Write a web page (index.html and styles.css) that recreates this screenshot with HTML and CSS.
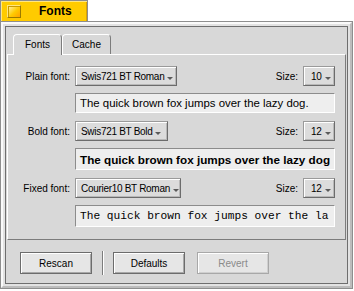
FILE: index.html
```html
<!DOCTYPE html>
<html>
<head>
<meta charset="utf-8">
<title>Fonts</title>
<link rel="stylesheet" href="styles.css">
</head>
<body>
<div class="window">
  <div class="wtab">
    <span class="close"></span>
    <span class="title">Fonts</span>
  </div>
  <div class="frame">
    <div class="bevel">
      <div class="content">
        <div class="tabs">
          <div class="tab active">Fonts</div>
          <div class="tab">Cache</div>
        </div>
        <div class="panel">
          <div class="group">
            <div class="row">
              <span class="label">Plain font:</span>
              <div class="menu menu-plain">Swis721 BT Roman<svg class="arrow" width="6" height="3" viewBox="0 0 6 3"><polygon points="0,0 6,0 3,3"/></svg></div>
              <span class="size-label">Size:</span>
              <div class="menu size">10<svg class="arrow" width="6" height="3" viewBox="0 0 6 3"><polygon points="0,0 6,0 3,3"/></svg></div>
            </div>
            <div class="preview preview-plain">The quick brown fox jumps over the lazy dog.</div>
          </div>
          <div class="group">
            <div class="row">
              <span class="label">Bold font:</span>
              <div class="menu menu-bold">Swis721 BT Bold<svg class="arrow" width="6" height="3" viewBox="0 0 6 3"><polygon points="0,0 6,0 3,3"/></svg></div>
              <span class="size-label">Size:</span>
              <div class="menu size">12<svg class="arrow" width="6" height="3" viewBox="0 0 6 3"><polygon points="0,0 6,0 3,3"/></svg></div>
            </div>
            <div class="preview preview-bold">The quick brown fox jumps over the lazy dog</div>
          </div>
          <div class="group">
            <div class="row">
              <span class="label">Fixed font:</span>
              <div class="menu menu-fixed">Courier10 BT Roman<svg class="arrow" width="6" height="3" viewBox="0 0 6 3"><polygon points="0,0 6,0 3,3"/></svg></div>
              <span class="size-label">Size:</span>
              <div class="menu size">12<svg class="arrow" width="6" height="3" viewBox="0 0 6 3"><polygon points="0,0 6,0 3,3"/></svg></div>
            </div>
            <div class="preview preview-fixed">The quick brown fox jumps over the la</div>
          </div>
        </div>
        <div class="buttons">
          <button class="btn">Rescan</button>
          <span class="sep"></span>
          <button class="btn">Defaults</button>
          <button class="btn" disabled>Revert</button>
        </div>
      </div>
    </div>
  </div>
</div>
</body>
</html>
```

FILE: styles.css
```css
* {
  margin: 0;
  padding: 0;
  box-sizing: border-box;
}
body {
  background: #fff;
  font-family: "Liberation Sans", Arial, sans-serif;
  font-size: 10px;
  color: #000;
}
.window {
  width: 353px;
}

/* yellow title tab */
.wtab {
  width: 88px;
  height: 21px;
  display: flex;
  align-items: center;
  padding-left: 6px;
  background: #ffcb00;
  border: 1px solid #8c8c8c;
  border-bottom: none;
  box-shadow: inset 1px 1px #ffe680, inset -1px 0 #d9a300;
}
.close {
  width: 14px;
  height: 13px;
  border: 1px solid;
  border-color: #ffe680 #9c7a00 #9c7a00 #ffe680;
  background: linear-gradient(135deg, #fff3b0, #ffcb00 55%, #ff9f00);
  box-shadow: inset 1px 1px #c89a00;
}
.title {
  margin-left: 18px;
  font-size: 12px;
  font-weight: bold;
}

/* window border */
.frame {
  height: 268px;
  border: 1px solid #8e8e8e;
}
.bevel {
  height: 100%;
  border: 2px solid;
  border-color: #fafafa #bcbcbc #bcbcbc #fafafa;
  background: #e2e2e2;
  padding: 2px;
}
.content {
  height: 100%;
  border: 1px solid #6e6e6e;
  background: #d8d8d8;
  padding: 7px 0 0 1px;
}

/* tab view */
.tabs {
  display: flex;
  padding-left: 6px;
  height: 20px;
}
.tab {
  width: 49px;
  height: 20px;
  text-align: center;
  line-height: 19px;
  border: 1px solid;
  border-color: #fff #7c7c7c transparent #fff;
  border-bottom: none;
  border-radius: 4px 4px 0 0;
}
.tab.active {
  position: relative;
  z-index: 1;
  height: 21px;
  background: #d8d8d8;
}
.panel {
  width: 339px;
  height: 186px;
  border: 1px solid;
  border-color: #fff #7c7c7c #7c7c7c #fff;
  padding: 11px 10px 0 0;
}
.group + .group {
  margin-top: 8px;
}
.row {
  display: flex;
  align-items: center;
  height: 20px;
}
.label {
  width: 62px;
  margin-right: 5px;
  text-align: right;
}
.size-label {
  margin-left: auto;
  margin-right: 5px;
}
.menu {
  display: flex;
  align-items: center;
  height: 20px;
  padding-left: 5px;
  border: 1px solid;
  border-color: #9a9a9a #6c6c6c #6c6c6c #9a9a9a;
  background: #dcdcdc;
  box-shadow: inset 1px 1px #fff, inset -1px -1px #b8b8b8;
  white-space: nowrap;
  letter-spacing: -0.3px;
}
.menu-plain {
  width: 102px;
}
.menu-bold {
  width: 93px;
}
.menu-fixed {
  width: 106px;
}
.menu.size {
  width: 32px;
  padding-left: 7px;
}
.arrow {
  margin-left: 3px;
  margin-top: 4px;
  fill: #5a5a5a;
}
.preview {
  margin: 7px 0 0 67px;
  height: 20px;
  padding-left: 4px;
  border: 1px solid;
  border-color: #8c8c8c #fff #fff #8c8c8c;
  background: #eeeeee;
  white-space: nowrap;
  overflow: hidden;
  display: flex;
  align-items: center;
}
.preview-plain {
  font-size: 11.4px;
}
.preview-bold {
  height: 22px;
  font-size: 11.7px;
  font-weight: bold;
}
.preview-fixed {
  height: 22px;
  font-family: "Liberation Mono", "Courier New", monospace;
  font-size: 11.2px;
}

/* bottom buttons */
.buttons {
  display: flex;
  align-items: center;
  padding: 11px 0 0 13px;
}
.btn {
  width: 72px;
  height: 22px;
  font-family: inherit;
  font-size: 10px;
  color: #000;
  background: #e6e6e6;
  border: 1px solid #6c6c6c;
  box-shadow: inset 1px 1px #fff, inset -1px -1px #a8a8a8;
}
.btn + .btn {
  margin-left: 12px;
}
.btn:disabled {
  color: #8a8a8a;
  border-color: #a8a8a8;
  box-shadow: inset 1px 1px #fff, inset -1px -1px #cfcfcf;
}
.sep {
  width: 2px;
  height: 24px;
  margin: 0 9px 0 10px;
  border-left: 1px solid #7c7c7c;
  border-right: 1px solid #fff;
}
```
